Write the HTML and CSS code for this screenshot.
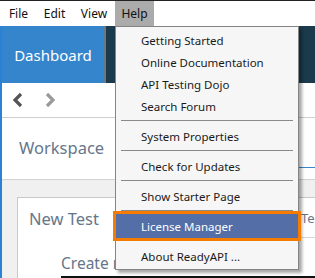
FILE: index.html
```html
<!DOCTYPE html>
<html lang="en">
<head>
    <meta name="viewport" content="width=device-width, initial-scale=1.0">
    <link rel="stylesheet" href="styles.css">
    <title>ReadyAPI</title>
</head>

<body>
    <div class="menubar">
        <span class="menu-item item-file">File</span>
        <span class="menu-item item-edit">Edit</span>
        <span class="menu-item item-view">View</span>
        <span class="menu-item item-help open">Help</span>
    </div>

    <div class="app">
        <div class="tabbar">
            <div class="tab-dash">Dashboard</div>
            <div class="tab-divider"></div>
        </div>

        <div class="navrow">
            <svg class="arrow" width="14" height="16" viewBox="0 0 14 16">
                <polyline points="10,2 4,8 10,14" fill="none" stroke="#555" stroke-width="3.2"/>
            </svg>
            <svg class="arrow" width="14" height="16" viewBox="0 0 14 16">
                <polyline points="4,2 10,8 4,14" fill="none" stroke="#9a9a9a" stroke-width="3.2"/>
            </svg>
        </div>

        <div class="workspace">
            <span class="ws-title">Workspace</span>
            <span class="ws-tab"></span>
        </div>

        <div class="content">
            <div class="card">
                <div class="card-head">
                    <span class="card-title">New Test</span>
                    <span class="card-side">Te</span>
                </div>
                <div class="card-body">
                    <div class="create"><span class="create-text">Create new functional test</span></div>
                </div>
            </div>
        </div>
    </div>

    <div class="dropdown">
        <div class="dd-item">Getting Started</div>
        <div class="dd-item">Online Documentation</div>
        <div class="dd-item">API Testing Dojo</div>
        <div class="dd-item">Search Forum</div>
        <div class="dd-sep"></div>
        <div class="dd-item">System Properties</div>
        <div class="dd-sep"></div>
        <div class="dd-item">Check for Updates</div>
        <div class="dd-sep"></div>
        <div class="dd-item">Show Starter Page</div>
        <div class="dd-sep"></div>
        <div class="dd-item selected">License Manager</div>
        <div class="dd-sep"></div>
        <div class="dd-item">About ReadyAPI ...</div>
    </div>
</body>

</html>
```

FILE: styles.css
```css
body {
    font-family: "Noto Sans", "Open Sans", sans-serif;
    margin: 0;
    padding: 0;
    width: 315px;
    height: 278px;
    overflow: hidden;
    position: relative;
    background: #fff;
}

.menubar {
    display: flex;
    height: 25px;
    border-top: 1px solid #222;
    padding-left: 1px;
    background: #fff;
}

.menu-item {
    font-size: 12px;
    color: #111;
    line-height: 25px;
    text-align: center;
}

.item-file { width: 35px; }
.item-edit { width: 37px; }
.item-view { width: 42px; }
.item-help { width: 39px; }

.menu-item.open {
    background-color: #ababab;
}

.app {
    border-left: 2px solid #2b82d4;
    height: 252px;
    overflow: hidden;
}

.tabbar {
    display: flex;
    height: 57px;
    background-color: #1b3a4c;
}

.tab-dash {
    width: 102px;
    background-color: #3585cc;
    color: #fff;
    font-size: 15px;
    display: flex;
    align-items: center;
    justify-content: center;
}

.tab-divider {
    width: 2px;
    background-color: #6a7880;
}

.navrow {
    height: 34px;
    display: flex;
    align-items: center;
    gap: 18px;
    padding-left: 9px;
    border-bottom: 1px solid #cfcfcf;
}

.workspace {
    height: 61px;
    display: flex;
    align-items: center;
    justify-content: space-between;
    border-bottom: 1px solid #d2d2d2;
}

.ws-title {
    padding-left: 17px;
    padding-bottom: 3px;
    font-size: 16.5px;
    color: #66768a;
}

.ws-tab {
    width: 20px;
    align-self: flex-end;
    margin-bottom: 11px;
    border-bottom: 1px solid #3b86c6;
}

.content {
    background-color: #f0f0f0;
    padding: 17px 0 0 15px;
    height: 81px;
}

.card {
    background: #fff;
    border-top: 1px solid #c9c9c9;
    border-left: 1px solid #c9c9c9;
    height: 80px;
}

.card-head {
    height: 39px;
    display: flex;
    align-items: center;
    justify-content: space-between;
    padding-top: 1px;
}

.card-title {
    padding-left: 11px;
    font-size: 16.5px;
    color: #66768a;
}

.card-side {
    width: 14px;
    font-size: 13px;
    color: #66768a;
    align-self: stretch;
    display: flex;
    align-items: center;
    border-bottom: 1px solid #d6d6d6;
    overflow: hidden;
}

.card-body {
    padding-left: 43px;
    padding-top: 12px;
}

.create {
    font-size: 15.5px;
    color: #66768a;
    line-height: 26px;
    height: 26px;
    border-bottom: 2px solid #111;
}

.create-text {
    display: block;
    width: 54px;
    overflow: hidden;
    white-space: nowrap;
}

.dropdown {
    position: absolute;
    left: 115px;
    top: 26px;
    width: 182px;
    background-color: #f6f6f6;
    border: 1px solid #858585;
    padding: 3px 0 1px 0;
    box-shadow: 3px 3px 3px rgba(0, 0, 0, 0.35);
}

.dd-item {
    height: 22px;
    line-height: 22px;
    padding-left: 25px;
    font-size: 11.5px;
    color: #1a1a1a;
    white-space: nowrap;
}

.dd-sep {
    height: 1px;
    background-color: #8a8a8a;
    margin: 2px 5px 5px 5px;
}

.dd-item.selected {
    background-color: #546fa7;
    color: #fff;
    height: 24px;
    margin-top: -2px;
    line-height: 26px;
    outline: 3px solid #f57c00;
    position: relative;
}
```
